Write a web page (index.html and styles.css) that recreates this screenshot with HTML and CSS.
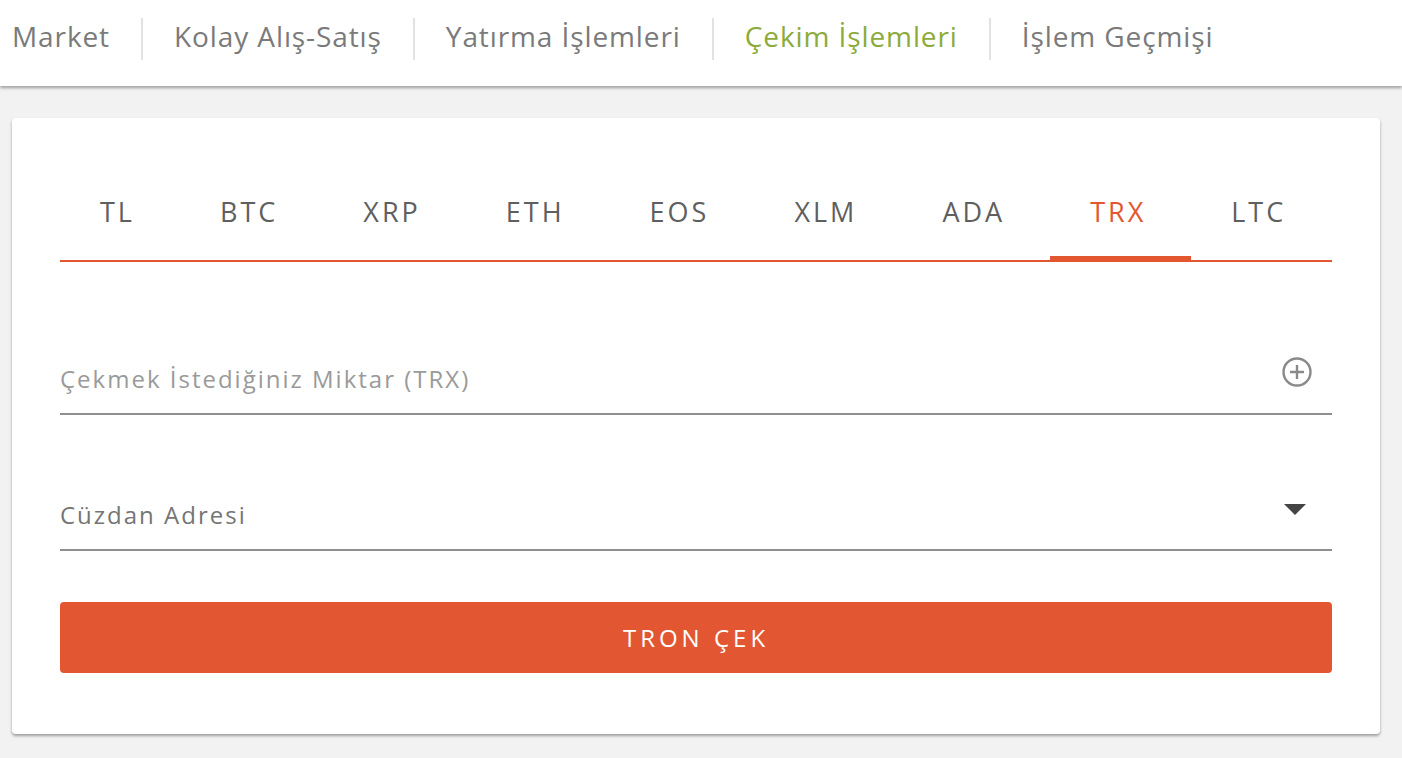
FILE: index.html
```html
<!DOCTYPE html>
<html lang="tr">
<head>
<meta charset="utf-8">
<title>Çekim İşlemleri</title>
<link rel="stylesheet" href="styles.css">
</head>
<body>
<header class="topbar">
  <nav class="nav">
    <a class="nav-item first">Market</a>
    <span class="nav-sep"></span>
    <a class="nav-item">Kolay Alış-Satış</a>
    <span class="nav-sep"></span>
    <a class="nav-item">Yatırma İşlemleri</a>
    <span class="nav-sep"></span>
    <a class="nav-item active">Çekim İşlemleri</a>
    <span class="nav-sep"></span>
    <a class="nav-item">İşlem Geçmişi</a>
  </nav>
</header>
<main class="content">
  <section class="card">
    <div class="tabs">
      <div class="tab">TL</div>
      <div class="tab">BTC</div>
      <div class="tab">XRP</div>
      <div class="tab">ETH</div>
      <div class="tab">EOS</div>
      <div class="tab">XLM</div>
      <div class="tab">ADA</div>
      <div class="tab active">TRX</div>
      <div class="tab">LTC</div>
    </div>
    <div class="field field-amount">
      <span class="placeholder">Çekmek İstediğiniz Miktar (TRX)</span>
      <svg class="plus-icon" width="32" height="32" viewBox="0 0 32 32" aria-hidden="true">
        <circle cx="16" cy="16" r="13.5" fill="none" stroke="#8a8a8a" stroke-width="2.4"/>
        <path d="M16 9v14M9 16h14" stroke="#8a8a8a" stroke-width="2.4" fill="none"/>
      </svg>
    </div>
    <div class="field field-address">
      <span class="label">Cüzdan Adresi</span>
      <svg class="caret" width="22" height="12" viewBox="0 0 22 12" aria-hidden="true">
        <path d="M0 0h22L11 11z" fill="#444"/>
      </svg>
    </div>
    <button class="submit">TRON ÇEK</button>
  </section>
</main>
</body>
</html>
```
FILE: styles.css
```css
* { box-sizing: border-box; }
html, body {
  margin: 0;
  padding: 0;
}
body {
  background: #f2f2f2;
  font-family: "Open Sans", "Noto Sans", sans-serif;
  width: 1402px;
  height: 758px;
  overflow: hidden;
}
.topbar {
  background: #fff;
  height: 86px;
  box-shadow: 0 2px 3px rgba(0, 0, 0, 0.35);
  position: relative;
  z-index: 1;
}
.nav {
  display: flex;
  align-items: center;
  height: 72px;
}
.nav-item {
  font-size: 28px;
  letter-spacing: 0.9px;
  color: #7a7a7a;
  padding: 0 31px;
  line-height: 1;
  white-space: nowrap;
}
.nav-item.first { padding-left: 12px; }
.nav-item.active { color: #8cab3a; }
.nav-sep {
  width: 2px;
  height: 42px;
  background: #e2e2e2;
  margin-top: 6px;
}
.content {
  padding: 32px 22px 0 12px;
}
.card {
  background: #fff;
  border-radius: 4px;
  box-shadow: 0 2px 3px rgba(0, 0, 0, 0.35);
  height: 616px;
  padding: 48px 48px 0 48px;
}
.tabs {
  display: flex;
  border-bottom: 2px solid #e2572f;
}
.tab {
  height: 96px;
  margin-bottom: -2px;
  display: flex;
  align-items: center;
  padding: 0 45px 6px 40px;
  font-size: 27px;
  letter-spacing: 3px;
  color: #5f5f5f;
}
.tab.active {
  color: #e2572f;
  box-shadow: inset 0 -6px 0 #e2572f;
}
.field {
  display: flex;
  align-items: center;
  justify-content: space-between;
  height: 72px;
  border-bottom: 2px solid #8f8f8f;
}
.field-amount { margin-top: 81px; }
.field-address { margin-top: 64px; }
.placeholder {
  font-size: 24px;
  letter-spacing: 2px;
  color: #9a9a9a;
}
.label {
  font-size: 24px;
  letter-spacing: 2px;
  color: #757575;
}
.plus-icon {
  margin-right: 19px;
  margin-bottom: 12px;
}
.caret {
  margin-right: 26px;
  margin-bottom: 8px;
}
.submit {
  display: block;
  width: 100%;
  height: 71px;
  margin-top: 51px;
  border: none;
  border-radius: 4px;
  background: #e25731;
  color: #fff;
  font-family: "Open Sans", "Noto Sans", sans-serif;
  font-size: 24px;
  letter-spacing: 4px;
}
```
